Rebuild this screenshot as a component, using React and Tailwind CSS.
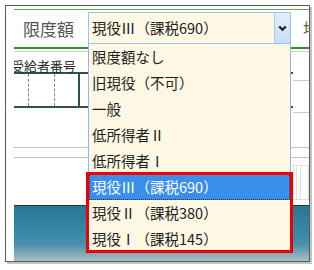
import React from "react";

const ITEMS = [
    "限度額なし",
    "旧現役（不可）",
    "一般",
    "低所得者Ⅱ",
    "低所得者Ⅰ",
    "現役Ⅲ（課税690）",
    "現役Ⅱ（課税380）",
    "現役Ⅰ（課税145）",
];
const SELECTED = 5;

function Chevron() {
    return (
        <svg width="9" height="7" viewBox="0 0 9 7">
            <path d="M1.2 1.5 L4.5 4.8 L7.8 1.5" fill="none" stroke="#1a1a1a" strokeWidth="2.2" />
        </svg>
    );
}

export default function App() {
    return (
        <div className="w-[314px] h-[270px] bg-white pt-[5px] pl-[5px] font-['Noto_Sans_CJK_JP',sans-serif]">
            <div className="relative w-[305px] h-[257px] border border-[#5a5a5a] shadow-[2px_2px_0_#c4c4c4] bg-white overflow-hidden">
                <div className="flex flex-col h-full pl-[8px] pt-[3px]">
                    {/* header row */}
                    <div className="h-px bg-[#5aaa5a]" />
                    <div className="flex items-start h-[37px] pt-[2px]">
                        <div className="w-[74px] shrink-0 pl-[9px] h-[32px] flex items-center text-[17px] text-[#555] leading-none whitespace-nowrap">限度額</div>
                        <div className="w-[203px] h-[32px] border border-[#9cc2ec] flex shrink-0">
                            <div className="flex-1 bg-[#fdf9e4] pl-[3px] flex items-center text-[14.5px] text-[#222] leading-none whitespace-nowrap">現役Ⅲ（課税690）</div>
                            <div className="w-[16px] border-l border-[#a9cbef] bg-[linear-gradient(to_bottom,#e1eefc,#c9def6)] flex items-center justify-center">
                                <Chevron />
                            </div>
                        </div>
                        <div className="ml-[12px] h-[32px] flex items-center text-[16px] text-[#6b5a36] leading-none shrink-0">地</div>
                    </div>
                    <div className="h-[2px] bg-[#2f8f2f]" />
                    <div className="h-px mt-[2px] bg-[#cdcdcd]" />

                    {/* upper body */}
                    <div className="flex h-[95px]">
                        <div className="flex-1 overflow-hidden">
                            <div className="mt-[7px] -ml-[3px] text-[13px] leading-[13px] text-[#2a2a2a] whitespace-nowrap">受給者番号</div>
                            <div className="h-[36px] border-y-2 border-[#2f5446] flex">
                                <div className="w-[15px] border-r border-dashed border-[#6f8c82]" />
                                <div className="w-[26px] border-r border-dashed border-[#6f8c82]" />
                                <div className="w-[25px] border-r-2 border-[#2f5446]" />
                                <div className="flex-1" />
                            </div>
                        </div>
                        <div className="w-[16px]">
                            <div className="h-px mt-[28px] bg-[#c8c8c8]" />
                            <div className="h-px mt-[31px] bg-[#c8c8c8]" />
                        </div>
                    </div>
                    <div className="h-px bg-[#c4c4c4]" />
                    <div className="h-px mt-[9px] bg-[#c4c4c4]" />

                    {/* lower body */}
                    <div className="flex h-[47px]">
                        <div className="flex-1" />
                        <div className="w-[16px] pt-[7px]">
                            <div className="h-[35px] border border-[#dedede] flex">
                                <div className="w-[3px] border-r border-[#e2e2e2]" />
                                <div className="w-[4px] border-r border-[#e2e2e2]" />
                            </div>
                        </div>
                    </div>
                    <div className="h-px bg-[#1f3742]" />
                    <div className="flex-1 bg-[linear-gradient(to_bottom,#2a7593_0%,#3587a8_45%,#4a90aa_70%,#86abb9_88%,#a8c0c8_100%)]" />
                </div>

                {/* open dropdown list */}
                <div className="absolute left-[82px] top-[38px] w-[203px] border border-t-0 border-[#8fb8e8] bg-[#fcf8e3]">
                    {ITEMS.map((item, i) => (
                        <div
                            key={item}
                            className={
                                i === SELECTED
                                    ? "h-[26px] pl-[3px] flex items-center text-[14.5px] leading-none bg-[#3a8eec] text-white outline outline-1 outline-dotted outline-[#333] -outline-offset-1"
                                    : "h-[26px] pl-[3px] flex items-center text-[14.5px] leading-none text-[#1e1e1e]"
                            }
                        >
                            {item}
                        </div>
                    ))}
                </div>

                {/* red highlight box */}
                <div className="absolute left-[80px] top-[166px] w-[207px] h-[81px] border-[3px] border-[#f20000]" />
            </div>
        </div>
    );
}
